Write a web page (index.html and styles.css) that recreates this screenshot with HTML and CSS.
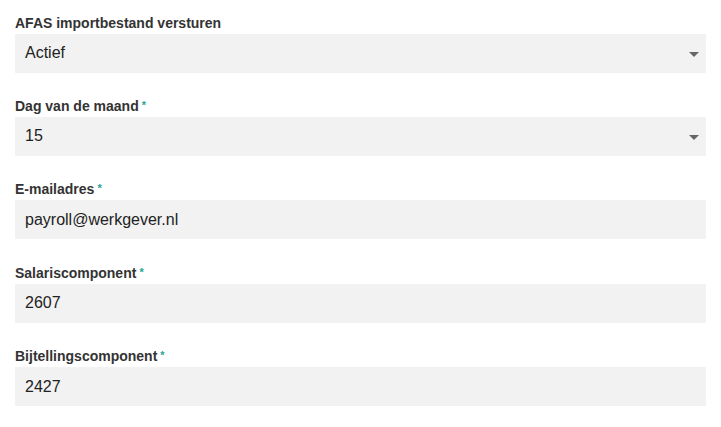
FILE: index.html
```html
<!DOCTYPE html>
<html lang="nl">
<head>
<meta charset="utf-8">
<title>AFAS instellingen</title>
<link rel="stylesheet" href="styles.css">
</head>
<body>
<form class="form">
  <div class="field">
    <label class="label">AFAS importbestand versturen</label>
    <div class="control select"><span class="value">Actief</span><span class="caret"></span></div>
  </div>
  <div class="field">
    <label class="label">Dag van de maand<span class="req">*</span></label>
    <div class="control select"><span class="value">15</span><span class="caret"></span></div>
  </div>
  <div class="field">
    <label class="label">E-mailadres<span class="req">*</span></label>
    <div class="control"><span class="value">payroll@werkgever.nl</span></div>
  </div>
  <div class="field">
    <label class="label">Salariscomponent<span class="req">*</span></label>
    <div class="control"><span class="value">2607</span></div>
  </div>
  <div class="field">
    <label class="label">Bijtellingscomponent<span class="req">*</span></label>
    <div class="control"><span class="value">2427</span></div>
  </div>
</form>
</body>
</html>
```
FILE: styles.css
```css
html, body {
  margin: 0;
  padding: 0;
  background: #ffffff;
}
body {
  font-family: "Liberation Sans", Arial, sans-serif;
  color: #222222;
}
.form {
  padding: 14.6px 15px 0 15px;
  display: flex;
  flex-direction: column;
  gap: 25.4px;
}
.field {
  display: flex;
  flex-direction: column;
  gap: 2px;
}
.label {
  display: block;
  height: 17px;
  font-size: 14px;
  font-weight: bold;
  line-height: 17px;
  color: #333333;
}
.req {
  color: #2aa39a;
  font-size: 11px;
  font-weight: bold;
  line-height: 0;
  margin-left: 3px;
  vertical-align: 2px;
}
.control {
  height: 39px;
  background: #f2f2f2;
  display: flex;
  align-items: center;
  justify-content: space-between;
  padding: 0 7px 0 10px;
}
.value {
  font-size: 16px;
  color: #222222;
}
.caret {
  width: 0;
  height: 0;
  border-left: 5px solid transparent;
  border-right: 5px solid transparent;
  border-top: 5px solid #666666;
  margin-top: 2px;
}
```
